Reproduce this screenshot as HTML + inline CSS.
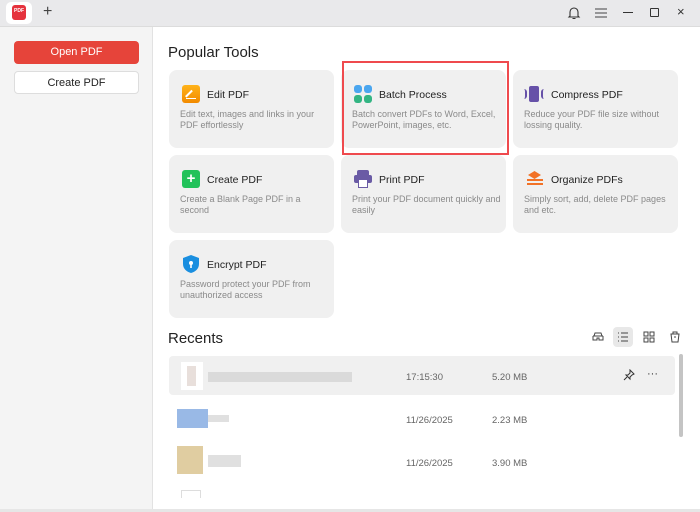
<!DOCTYPE html>
<html><head><meta charset="utf-8"><style>
*{margin:0;padding:0;box-sizing:border-box}
body{width:700px;height:512px;overflow:hidden;font-family:"Liberation Sans",sans-serif;background:#fff;position:relative;color:#222}
.a{position:absolute}
.top{left:0;top:0;width:700px;height:27px;background:#e9e9eb;border-bottom:1px solid #dcdcdc}
.side{left:0;top:27px;width:153px;height:485px;background:#f4f4f4;border-right:1px solid #e2e2e2}
.btn{left:14px;width:125px;height:23px;border-radius:4px;font-size:11px;text-align:center;line-height:23px}
.card{width:165px;height:78px;background:#f0f0f0;border-radius:8px}
.card .t{position:absolute;left:38px;top:19px;font-size:10.5px;color:#222}
.card .d{position:absolute;left:11px;top:39px;font-size:9px;line-height:11px;color:#8a8a8a;width:150px}
.card .i{position:absolute;left:13px;top:15px;width:18px;height:18px}
.h{font-size:15px;color:#222}
.blur{position:absolute;background:#ccc;opacity:.6}
.rt{font-size:9.5px;color:#666;position:absolute}
</style></head><body>
<div class="a top"></div>
<div class="a" style="left:6px;top:2px;width:26px;height:22px;background:#fff;border-radius:5px"></div>
<div class="a" style="left:12px;top:5px;width:14px;height:15px;background:#e5323d;border-radius:3px;color:#fff;font-size:5px;text-align:center;line-height:12px;font-weight:bold">PDF</div>
<div class="a" style="left:43px;top:3px;font-size:16px;color:#444">+</div>
<svg class="a" style="left:566px;top:6px" width="16" height="14" viewBox="0 0 16 14"><path d="M4 10V6a4 4 0 0 1 8 0v4l1 1H3zM6.5 12.5h3" fill="none" stroke="#333" stroke-width="1.1"/></svg>
<svg class="a" style="left:594px;top:6px" width="14" height="14"><path d="M1 3h12M1 7h12M1 11h12" stroke="#444" stroke-width="1"/></svg>
<div class="a" style="left:623px;top:12px;width:10px;height:1px;background:#333"></div>
<div class="a" style="left:650px;top:8px;width:9px;height:9px;border:1.2px solid #333;border-radius:1px"></div>
<div class="a" style="left:677px;top:4px;font-size:13px;color:#333">×</div>
<div class="a side"></div>
<div class="a btn" style="top:41px;background:#e6443a;color:#fff">Open PDF</div>
<div class="a btn" style="top:71px;background:#fff;border:1px solid #ddd;color:#222">Create PDF</div>
<div class="a h" style="left:168px;top:44px">Popular Tools</div>

<div class="a card" style="left:169px;top:70px"><div class="i" style="background:linear-gradient(#ffb31a,#f28a00);border-radius:3px"><div style="position:absolute;left:4px;bottom:4px;width:10px;height:1.5px;background:#fff"></div><div style="position:absolute;left:6px;top:4px;width:1.5px;height:9px;background:#fff;transform:rotate(45deg)"></div></div><div class="t">Edit PDF</div><div class="d">Edit text, images and links in your PDF effortlessly</div></div>
<div class="a card" style="left:341px;top:70px"><div class="i"><div style="position:absolute;left:0;top:0;width:8px;height:8px;border-radius:3px;background:#4aa6ef"></div><div style="position:absolute;left:10px;top:0;width:8px;height:8px;border-radius:3px;background:#4aa6ef"></div><div style="position:absolute;left:0;top:10px;width:8px;height:8px;border-radius:3px;background:#33b583"></div><div style="position:absolute;left:10px;top:10px;width:8px;height:8px;border-radius:3px;background:#33b583"></div></div><div class="t">Batch Process</div><div class="d">Batch convert PDFs to Word, Excel, PowerPoint, images, etc.</div></div>
<div class="a" style="left:342px;top:61px;width:167px;height:94px;border:2px solid #ef4a4e"></div>
<div class="a card" style="left:513px;top:70px"><div class="i" style="left:11px;width:20px"><div style="position:absolute;left:5px;top:1px;width:10px;height:16px;background:#6651a8;border-radius:2px"></div><div style="position:absolute;left:0;top:4px;width:3px;height:10px;border-right:2px solid #6651a8;border-radius:0 5px 5px 0"></div><div style="position:absolute;right:0;top:4px;width:3px;height:10px;border-left:2px solid #6651a8;border-radius:5px 0 0 5px"></div></div><div class="t">Compress PDF</div><div class="d">Reduce your PDF file size without lossing quality.</div></div>

<div class="a card" style="left:169px;top:155px"><div class="i" style="background:#22c25a;border-radius:3px;color:#fff;font-size:15px;font-weight:bold;text-align:center;line-height:17px">+</div><div class="t">Create PDF</div><div class="d">Create a Blank Page PDF in a second</div></div>
<div class="a card" style="left:341px;top:155px"><div class="i"><div style="position:absolute;left:3px;top:0;width:12px;height:5px;background:#6a5ba5;border-radius:2px 2px 0 0"></div><div style="position:absolute;left:0;top:5px;width:18px;height:8px;background:#6a5ba5;border-radius:2px"></div><div style="position:absolute;left:4px;top:9px;width:10px;height:9px;background:#fff;border:1px solid #6a5ba5"></div></div><div class="t">Print PDF</div><div class="d">Print your PDF document quickly and easily</div></div>
<div class="a card" style="left:513px;top:155px"><div class="i"><div style="position:absolute;left:2px;top:1px;width:13px;height:8px;background:#f27227;transform:skewY(0) rotate(0);clip-path:polygon(50% 0,100% 50%,50% 100%,0 50%)"></div><div style="position:absolute;left:1px;top:8px;width:16px;height:3px;border-bottom:2px solid #f27227"></div><div style="position:absolute;left:1px;top:12px;width:16px;height:3px;border-bottom:2px solid #f27227"></div></div><div class="t">Organize PDFs</div><div class="d">Simply sort, add, delete PDF pages and etc.</div></div>

<div class="a card" style="left:169px;top:240px"><div class="i"><svg width="18" height="18"><path d="M9 0L17 3V9C17 14 13 17 9 18C5 17 1 14 1 9V3Z" fill="#1a8fe0"/><circle cx="9" cy="8" r="2" fill="#fff"/><rect x="8.2" y="9" width="1.6" height="4" fill="#fff"/></svg></div><div class="t">Encrypt PDF</div><div class="d">Password protect your PDF from unauthorized access</div></div>

<div class="a h" style="left:168px;top:330px">Recents</div>
<svg class="a" style="left:591px;top:331px" width="14" height="12"><path d="M2 5h10M3 5l1-3h6l1 3M2 5v4h4V7h2v2h4V5" fill="none" stroke="#444" stroke-width="1"/></svg>
<div class="a" style="left:613px;top:327px;width:20px;height:20px;background:#e8e8e8;border-radius:4px"></div>
<svg class="a" style="left:617px;top:331px" width="12" height="12"><path d="M1 2h1M4 2h7M1 6h1M4 6h7M1 10h1M4 10h7" stroke="#444" stroke-width="1"/></svg>
<svg class="a" style="left:643px;top:331px" width="12" height="12"><rect x="1" y="1" width="4" height="4" fill="none" stroke="#444"/><rect x="7" y="1" width="4" height="4" fill="none" stroke="#444"/><rect x="1" y="7" width="4" height="4" fill="none" stroke="#444"/><rect x="7" y="7" width="4" height="4" fill="none" stroke="#444"/></svg>
<svg class="a" style="left:669px;top:330px" width="12" height="13"><path d="M2 4h8l-1 8H3zM4 4V2h4v2M5 7h2" fill="none" stroke="#444" stroke-width="1"/></svg>

<div class="a" style="left:169px;top:356px;width:506px;height:39px;background:#f0f0f0;border-radius:4px"></div>
<div class="a" style="left:181px;top:362px;width:22px;height:28px;background:#fff"></div>
<div class="blur" style="left:187px;top:366px;width:9px;height:20px;background:#d9c9c3"></div>
<div class="blur" style="left:208px;top:372px;width:144px;height:10px"></div>
<div class="rt" style="left:406px;top:372px">17:15:30</div>
<div class="rt" style="left:492px;top:372px">5.20 MB</div>
<svg class="a" style="left:623px;top:369px" width="12" height="12"><path d="M7 1l4 4-2 1-2 2 0 2-4-4 2 0 2-2zM4 8l-3 3" fill="none" stroke="#333" stroke-width="1"/></svg>
<div class="a" style="left:647px;top:368px;font-size:11px;color:#333">···</div>
<div class="blur" style="left:177px;top:409px;width:31px;height:19px;background:#7fa8e0;opacity:.8"></div>
<div class="blur" style="left:208px;top:415px;width:21px;height:7px"></div>
<div class="rt" style="left:406px;top:415px">11/26/2025</div>
<div class="rt" style="left:492px;top:415px">2.23 MB</div>
<div class="blur" style="left:177px;top:446px;width:26px;height:28px;background:#d8c08a;opacity:.8"></div>
<div class="blur" style="left:208px;top:455px;width:33px;height:12px"></div>
<div class="rt" style="left:406px;top:458px">11/26/2025</div>
<div class="rt" style="left:492px;top:458px">3.90 MB</div>
<div class="a" style="left:181px;top:490px;width:20px;height:8px;border:1px solid #ddd;border-bottom:none"></div>
<div class="a" style="left:679px;top:354px;width:4px;height:83px;background:#c4c4c4;border-radius:2px"></div>
<div class="a" style="left:0;top:509px;width:700px;height:3px;background:#e6e6e6"></div>
</body></html>
